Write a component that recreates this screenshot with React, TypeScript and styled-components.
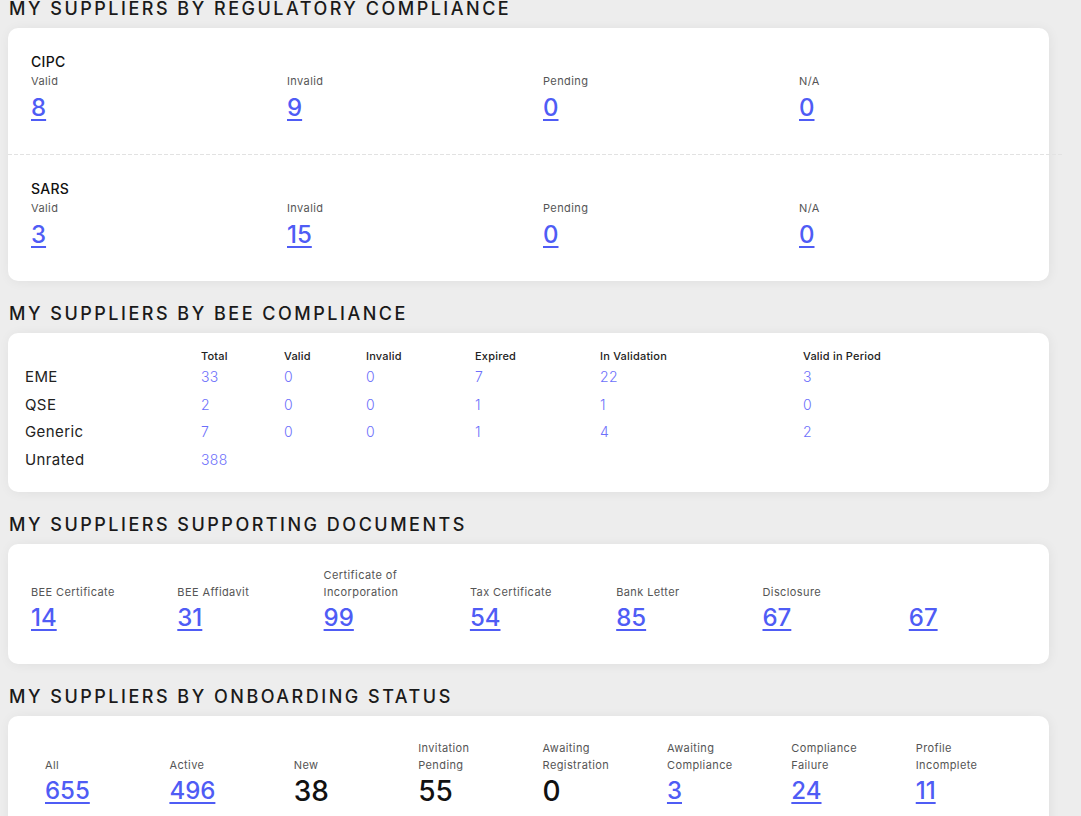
import React from "react";
import styled, { createGlobalStyle } from "styled-components";

const GlobalStyle = createGlobalStyle`
  html, body { margin: 0; padding: 0; background: #ededed; }
  body { font-family: Inter, "Noto Sans", sans-serif; color: #1c1c1c; }
  * { box-sizing: border-box; }
`;

const Page = styled.main`
  width: 1041px;
  margin-left: 8px;
  margin-top: -2px;
  padding-bottom: 40px;
  display: flex;
  flex-direction: column;
  gap: 22px;
`;

const Section = styled.section`
  display: flex;
  flex-direction: column;
  gap: 8px;
`;

const SectionTitle = styled.h2`
  margin: 0 0 0 1px;
  font-size: 18px;
  font-weight: 500;
  letter-spacing: 2.5px;
  line-height: 22px;
  color: #1a1a1a;
  text-transform: uppercase;
`;

const Card = styled.div`
  background: #fff;
  border-radius: 10px;
  box-shadow: 1px 1px 12px rgba(0, 0, 0, 0.06);
`;

/* Regulatory */
const RegBlock = styled.div`
  padding: 25px 0 31px 23px;
`;

const RegTitle = styled.div`
  font-size: 14px;
  line-height: 18px;
  font-weight: 500;
  color: #111;
  margin-bottom: 2px;
  letter-spacing: 0.3px;
`;

const RegGrid = styled.div`
  display: grid;
  grid-template-columns: repeat(4, 256px);
`;

const Divider = styled.hr`
  margin: 0 -14px 0 0;
  border: 0;
  height: 1px;
  background-image: repeating-linear-gradient(
    to right,
    #e2e2e2 0 4px,
    transparent 4px 6px
  );
`;

const Stat = styled.div`
  display: flex;
  flex-direction: column;
  justify-content: flex-end;
`;

const StatLabel = styled.div<{ $lh?: number }>`
  font-size: 11px;
  line-height: ${(p) => p.$lh ?? 16}px;
  color: #555;
  font-weight: 400;
  letter-spacing: 0.4px;
`;

const StatValue = styled.a<{ $plain?: boolean; $gap?: number }>`
  display: block;
  margin-top: ${(p) => p.$gap ?? 4}px;
  font-size: ${(p) => (p.$plain ? 28 : 24)}px;
  line-height: 30px;
  font-weight: 500;
  color: ${(p) => (p.$plain ? "#111" : "#4f5cf5")};
  text-decoration: ${(p) => (p.$plain ? "none" : "underline")};
  text-decoration-thickness: 2px;
  text-underline-offset: 3px;
  cursor: pointer;
  width: fit-content;
`;

/* BEE */
const BeeCard = styled(Card)`
  padding: 17px 0 19px 17px;
`;

const BeeGrid = styled.div`
  display: grid;
  grid-template-columns: 176px 83px 82px 109px 125px 203px 1fr;
  grid-template-rows: 13px repeat(4, 27.5px);
  align-items: center;
`;

const BeeHead = styled.div`
  font-size: 11px;
  font-weight: 500;
  color: #222;
  line-height: 13px;
  letter-spacing: 0.2px;
`;

const BeeRowLabel = styled.div`
  font-size: 15px;
  color: #222;
  font-weight: 400;
  letter-spacing: 0.4px;
`;

const BeeNum = styled.a`
  font-size: 14px;
  color: #6d70fb;
  font-weight: 300;
  cursor: pointer;
  width: fit-content;
  letter-spacing: 0.3px;
`;

/* Documents */
const DocCard = styled(Card)`
  padding: 23px 0 31px 23px;
`;

const DocGrid = styled.div<{ $cols: number; $w: number }>`
  display: grid;
  grid-template-columns: repeat(${(p) => p.$cols}, ${(p) => p.$w}px);
`;

const OnbCard = styled(Card)`
  padding: 24px 0 31px 37px;
`;

const reg = [
  { title: "CIPC", values: [8, 9, 0, 0] },
  { title: "SARS", values: [3, 15, 0, 0] },
];
const regLabels = ["Valid", "Invalid", "Pending", "N/A"];

const beeHeads = ["Total", "Valid", "Invalid", "Expired", "In Validation", "Valid in Period"];
const beeRows: { label: string; values: number[] }[] = [
  { label: "EME", values: [33, 0, 0, 7, 22, 3] },
  { label: "QSE", values: [2, 0, 0, 1, 1, 0] },
  { label: "Generic", values: [7, 0, 0, 1, 4, 2] },
  { label: "Unrated", values: [388] },
];

const docs: { label: string[]; value: number }[] = [
  { label: ["BEE Certificate"], value: 14 },
  { label: ["BEE Affidavit"], value: 31 },
  { label: ["Certificate of", "Incorporation"], value: 99 },
  { label: ["Tax Certificate"], value: 54 },
  { label: ["Bank Letter"], value: 85 },
  { label: ["Disclosure"], value: 67 },
  { label: [], value: 67 },
];

const onboarding: { label: string[]; value: number; plain?: boolean }[] = [
  { label: ["All"], value: 655 },
  { label: ["Active"], value: 496 },
  { label: ["New"], value: 38, plain: true },
  { label: ["Invitation", "Pending"], value: 55, plain: true },
  { label: ["Awaiting", "Registration"], value: 0, plain: true },
  { label: ["Awaiting", "Compliance"], value: 3 },
  { label: ["Compliance", "Failure"], value: 24 },
  { label: ["Profile", "Incomplete"], value: 11 },
];

export default function App() {
  return (
    <>
      <GlobalStyle />
      <Page>
        <Section>
          <SectionTitle>My Suppliers by Regulatory Compliance</SectionTitle>
          <Card>
            {reg.map((r, i) => (
              <React.Fragment key={r.title}>
                {i > 0 && <Divider />}
                <RegBlock>
                  <RegTitle>{r.title}</RegTitle>
                  <RegGrid>
                    {r.values.map((v, j) => (
                      <Stat key={j}>
                        <StatLabel>{regLabels[j]}</StatLabel>
                        <StatValue>{v}</StatValue>
                      </Stat>
                    ))}
                  </RegGrid>
                </RegBlock>
              </React.Fragment>
            ))}
          </Card>
        </Section>

        <Section>
          <SectionTitle>My Suppliers by BEE Compliance</SectionTitle>
          <BeeCard>
            <BeeGrid>
              <div />
              {beeHeads.map((h) => (
                <BeeHead key={h}>{h}</BeeHead>
              ))}
              {beeRows.map((row) => (
                <React.Fragment key={row.label}>
                  <BeeRowLabel>{row.label}</BeeRowLabel>
                  {beeHeads.map((_, j) =>
                    row.values[j] !== undefined ? (
                      <BeeNum key={j}>{row.values[j]}</BeeNum>
                    ) : (
                      <div key={j} />
                    )
                  )}
                </React.Fragment>
              ))}
            </BeeGrid>
          </BeeCard>
        </Section>

        <Section>
          <SectionTitle>My Suppliers Supporting Documents</SectionTitle>
          <DocCard>
            <DocGrid $cols={7} $w={146.3}>
              {docs.map((d, i) => (
                <Stat key={i}>
                  {d.label.map((l) => (
                    <StatLabel key={l} $lh={17}>
                      {l}
                    </StatLabel>
                  ))}
                  <StatValue $gap={2}>{d.value}</StatValue>
                </Stat>
              ))}
            </DocGrid>
          </DocCard>
        </Section>

        <Section>
          <SectionTitle>My Suppliers by Onboarding Status</SectionTitle>
          <OnbCard>
            <DocGrid $cols={8} $w={124.4}>
              {onboarding.map((d, i) => (
                <Stat key={i}>
                  {d.label.map((l) => (
                    <StatLabel key={l} $lh={17}>
                      {l}
                    </StatLabel>
                  ))}
                  <StatValue $gap={2} $plain={d.plain} as={d.plain ? "span" : "a"}>
                    {d.value}
                  </StatValue>
                </Stat>
              ))}
            </DocGrid>
          </OnbCard>
        </Section>
      </Page>
    </>
  );
}
